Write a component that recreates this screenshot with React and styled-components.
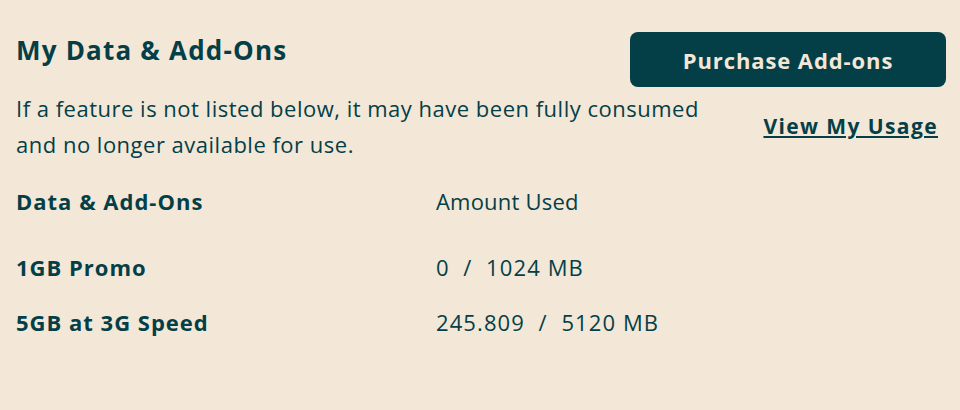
import React from "react";
import styled, { createGlobalStyle } from "styled-components";

const TEAL = "#043f47";
const BG = "#f3e7d8";

const Global = createGlobalStyle`
  html, body { margin: 0; padding: 0; background: ${BG}; }
  body { font-family: "Open Sans", "Liberation Sans", sans-serif; color: ${TEAL}; }
`;

const Page = styled.div`
  width: 960px;
  height: 410px;
  box-sizing: border-box;
  padding: 32px 14px 0 16px;
  background: ${BG};
`;

const Row = styled.div`
  display: flex;
  justify-content: space-between;
  align-items: ${(p) => p.$align || "flex-start"};
  margin-top: ${(p) => p.$top || 0}px;
`;

const Title = styled.h1`
  margin: 2px 0 0;
  font-size: 26px;
  font-weight: 700;
  line-height: 32px;
  letter-spacing: 1.2px;
`;

const Desc = styled.p`
  margin: 0;
  width: 708px;
  font-size: 22px;
  line-height: 36px;
  letter-spacing: 0.5px;
`;

const Button = styled.button`
  width: 316px;
  height: 55px;
  padding: 0;
  border: none;
  border-radius: 8px;
  background: ${TEAL};
  color: ${BG};
  font-family: inherit;
  font-size: 22px;
  font-weight: 700;
  letter-spacing: 0.9px;
  cursor: pointer;
`;

const Link = styled.a`
  margin-right: 8px;
  font-size: 21px;
  line-height: 28px;
  font-weight: 700;
  letter-spacing: 1.4px;
  color: ${TEAL};
  text-decoration: underline;
  text-decoration-thickness: 2px;
  text-underline-offset: 2px;
`;

const Table = styled.div`
  display: grid;
  grid-template-columns: 420px 1fr;
  margin-top: 25px;
`;

const Cell = styled.div`
  font-size: 22px;
  line-height: 28px;
  font-weight: ${(p) => (p.$bold ? 700 : 400)};
  letter-spacing: ${(p) => (p.$bold ? "1px" : p.$num ? "1.1px" : "0.2px")};
  white-space: pre;
  padding-bottom: ${(p) => p.$gap}px;
`;

const rows = [
  ["1GB Promo", "0  /  1024 MB"],
  ["5GB at 3G Speed", "245.809  /  5120 MB"],
];

export default function App() {
  return (
    <Page>
      <Global />
      <Row>
        <Title>My Data &amp; Add-Ons</Title>
        <Button>Purchase Add-ons</Button>
      </Row>
      <Row $align="center" $top={3}>
        <Desc>
          If a feature is not listed below, it may have been fully consumed
          and no longer available for use.
        </Desc>
        <Link href="#">View My Usage</Link>
      </Row>
      <Table>
        <Cell $bold $gap={38}>Data &amp; Add-Ons</Cell>
        <Cell $gap={38}>Amount Used</Cell>
        {rows.map(([name, amount]) => (
          <React.Fragment key={name}>
            <Cell $bold $gap={27}>{name}</Cell>
            <Cell $num $gap={27}>{amount}</Cell>
          </React.Fragment>
        ))}
      </Table>
    </Page>
  );
}
